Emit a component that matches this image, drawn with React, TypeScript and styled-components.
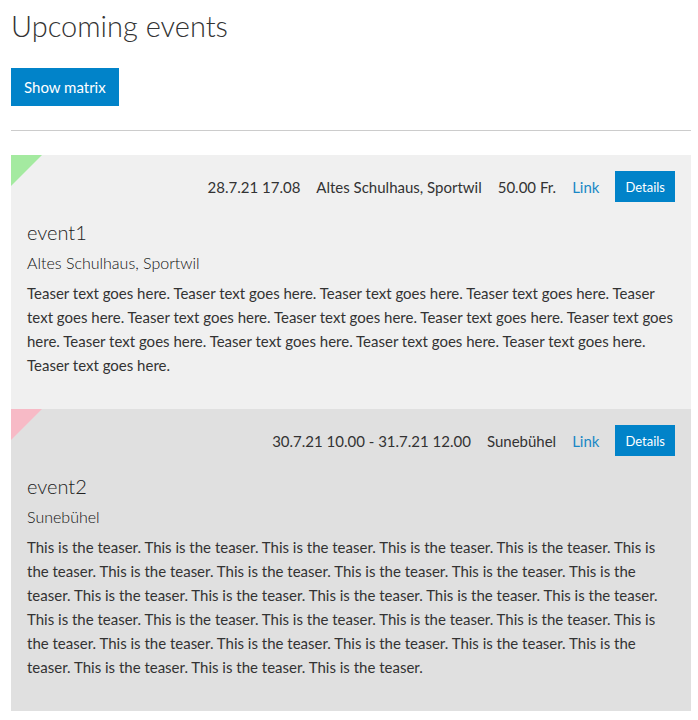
import React from "react";
import styled, { createGlobalStyle } from "styled-components";

const Global = createGlobalStyle`
  html, body { margin: 0; padding: 0; background: #fff; }
  body { font-family: "Lato", "Open Sans", sans-serif; color: #333; }
`;

const Page = styled.div`
  padding: 0 7px 0 11px;
`;

const Heading = styled.h1`
  margin: 0;
  padding-top: 8px;
  font-size: 29px;
  font-weight: 300;
  line-height: 36px;
  color: #333;
`;

const PrimaryButton = styled.button<{ $small?: boolean }>`
  display: inline-flex;
  align-items: center;
  justify-content: center;
  border: none;
  background: #0183c9;
  color: #fff;
  font-family: inherit;
  font-size: ${(p) => (p.$small ? "13px" : "15px")};
  height: ${(p) => (p.$small ? "31px" : "38px")};
  padding: ${(p) => (p.$small ? "0 10px" : "0 13px")};
  cursor: pointer;
`;

const Toolbar = styled.div`
  margin-top: 24px;
  display: flex;
`;

const Rule = styled.hr`
  margin: 24px 0 24px;
  border: none;
  border-top: 1px solid #ccc;
`;

const Card = styled.div<{ $bg: string; $flag: string }>`
  position: relative;
  background: ${(p) => p.$bg};
  padding: 16px 16px 32px 16px;
  &::before {
    content: "";
    position: absolute;
    left: 0;
    top: 0;
    width: 0;
    height: 0;
    border-top: 31px solid ${(p) => p.$flag};
    border-right: 31px solid transparent;
  }
`;

const Meta = styled.div`
  display: flex;
  justify-content: flex-end;
  align-items: center;
  gap: 16px;
  font-size: 15px;
  color: #333;
`;

const MetaLink = styled.a`
  color: #1a87c5;
  text-decoration: none;
`;

const Title = styled.h2`
  margin: 18px 0 0;
  font-size: 20px;
  font-weight: 300;
  line-height: 24px;
  color: #222;
`;

const Location = styled.div`
  margin-top: 9px;
  font-size: 16px;
  font-weight: 300;
  line-height: 20px;
  color: #111;
`;

const Teaser = styled.p`
  margin: 8px 0 0;
  font-size: 15px;
  line-height: 24px;
`;

const events = [
  {
    bg: "#f0f0f0",
    flag: "#a4eaa0",
    meta: ["28.7.21 17.08", "Altes Schulhaus, Sportwil", "50.00 Fr."],
    title: "event1",
    location: "Altes Schulhaus, Sportwil",
    teaser: Array(14).fill("Teaser text goes here.").join(" "),
  },
  {
    bg: "#e0e0e0",
    flag: "#f7bac6",
    meta: ["30.7.21 10.00 - 31.7.21 12.00", "Sunebühel"],
    title: "event2",
    location: "Sunebühel",
    teaser: Array(30).fill("This is the teaser.").join(" "),
  },
];

export default function App() {
  return (
    <Page>
      <Global />
      <Heading>Upcoming events</Heading>
      <Toolbar>
        <PrimaryButton>Show matrix</PrimaryButton>
      </Toolbar>
      <Rule />
      {events.map((e) => (
        <Card key={e.title} $bg={e.bg} $flag={e.flag}>
          <Meta>
            {e.meta.map((m) => (
              <span key={m}>{m}</span>
            ))}
            <MetaLink href="#">Link</MetaLink>
            <PrimaryButton $small>Details</PrimaryButton>
          </Meta>
          <Title>{e.title}</Title>
          <Location>{e.location}</Location>
          <Teaser>{e.teaser}</Teaser>
        </Card>
      ))}
    </Page>
  );
}
